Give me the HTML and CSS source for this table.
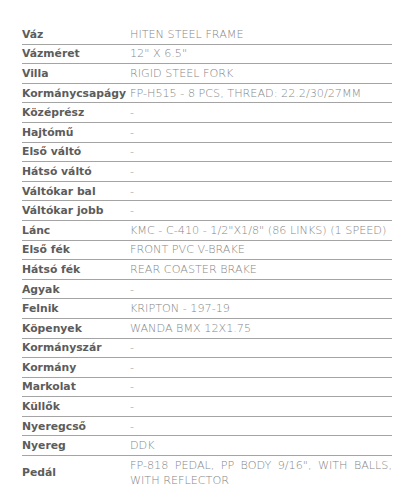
FILE: index.html
```html
<!DOCTYPE html>
<html lang="hu">
<head>
<meta charset="utf-8">
<title>Specifikáció</title>
<link rel="stylesheet" href="styles.css">
</head>
<body>
<div class="wrap">
<table class="spec">
<tr><th>Váz</th><td>HITEN STEEL FRAME</td></tr>
<tr><th>Vázméret</th><td>12" X 6.5"</td></tr>
<tr><th>Villa</th><td>RIGID STEEL FORK</td></tr>
<tr><th>Kormánycsapágy</th><td>FP-H515 - 8 PCS, THREAD: 22.2/30/27MM</td></tr>
<tr><th>Középrész</th><td>-</td></tr>
<tr><th>Hajtómű</th><td>-</td></tr>
<tr><th>Első váltó</th><td>-</td></tr>
<tr><th>Hátsó váltó</th><td>-</td></tr>
<tr><th>Váltókar bal</th><td>-</td></tr>
<tr><th>Váltókar jobb</th><td>-</td></tr>
<tr><th>Lánc</th><td>KMC - C-410 - 1/2"X1/8" (86 LINKS) (1 SPEED)</td></tr>
<tr><th>Első fék</th><td>FRONT PVC V-BRAKE</td></tr>
<tr><th>Hátsó fék</th><td>REAR COASTER BRAKE</td></tr>
<tr><th>Agyak</th><td>-</td></tr>
<tr><th>Felnik</th><td>KRIPTON - 197-19</td></tr>
<tr><th>Köpenyek</th><td>WANDA BMX 12X1.75</td></tr>
<tr><th>Kormányszár</th><td>-</td></tr>
<tr><th>Kormány</th><td>-</td></tr>
<tr><th>Markolat</th><td>-</td></tr>
<tr><th>Küllők</th><td>-</td></tr>
<tr><th>Nyeregcső</th><td>-</td></tr>
<tr><th>Nyereg</th><td>DDK</td></tr>
<tr class="last"><th>Pedál</th><td>FP-818 PEDAL, PP BODY 9/16", WITH BALLS, WITH REFLECTOR</td></tr>
</table>
</div>
</body>
</html>
```
FILE: styles.css
```css
html, body {
  margin: 0;
  padding: 0;
  background: #ffffff;
}
.wrap {
  padding: 25px 20px 0 22px;
}
.spec {
  width: 370px;
  border-collapse: collapse;
  table-layout: fixed;
}
.spec th,
.spec td {
  padding: 1.8px 0;
  line-height: 15px;
  border-bottom: 1px solid #a4a4a4;
  vertical-align: middle;
}
.spec th {
  width: 108px;
  text-align: left;
  font-family: "DejaVu Sans", "Noto Sans", sans-serif;
  font-weight: 700;
  font-size: 10.8px;
  color: #5c5c5c;
  white-space: nowrap;
}
.spec td {
  font-family: "DejaVu Sans", "Noto Sans", sans-serif;
  font-weight: 200;
  font-size: 11.2px;
  color: #878787;
  text-align: justify;
}
.spec .last th,
.spec .last td {
  border-bottom: none;
}
```
